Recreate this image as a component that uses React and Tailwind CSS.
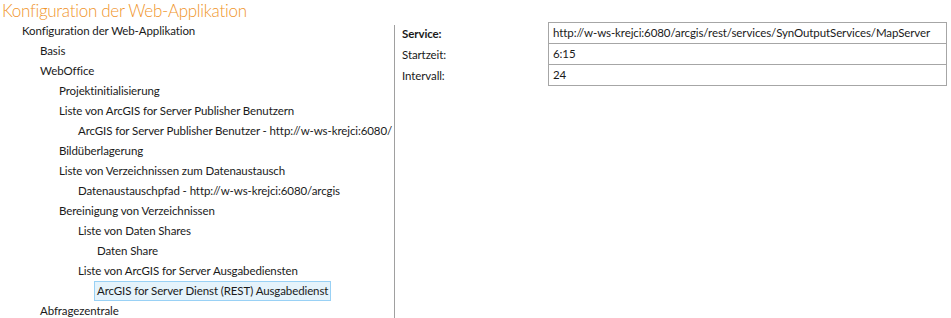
const tree = [
  { label: 'Konfiguration der Web-Applikation', level: 0 },
  { label: 'Basis', level: 1 },
  { label: 'WebOffice', level: 1 },
  { label: 'Projektinitialisierung', level: 2 },
  { label: 'Liste von ArcGIS for Server Publisher Benutzern', level: 2 },
  { label: 'ArcGIS for Server Publisher Benutzer - http://w-ws-krejci:6080/', level: 3 },
  { label: 'Bildüberlagerung', level: 2 },
  { label: 'Liste von Verzeichnissen zum Datenaustausch', level: 2 },
  { label: 'Datenaustauschpfad - http://w-ws-krejci:6080/arcgis', level: 3 },
  { label: 'Bereinigung von Verzeichnissen', level: 2 },
  { label: 'Liste von Daten Shares', level: 3 },
  { label: 'Daten Share', level: 4 },
  { label: 'Liste von ArcGIS for Server Ausgabediensten', level: 3 },
  { label: 'ArcGIS for Server Dienst (REST) Ausgabedienst', level: 4, selected: true },
  { label: 'Abfragezentrale', level: 1 },
];

const indent = ['pl-[19px]', 'pl-[37px]', 'pl-[56px]', 'pl-[75px]', 'pl-[94px]'];

const fields = [
  { label: 'Service:', value: 'http://w-ws-krejci:6080/arcgis/rest/services/SynOutputServices/MapServer', bold: true },
  { label: 'Startzeit:', value: '6:15' },
  { label: 'Intervall:', value: '24' },
];

export default function App() {
  return (
    <div
      className="w-[951px] h-[318px] overflow-hidden bg-white text-[11.5px] tracking-[-0.1px] text-[#1a1a1a] whitespace-nowrap"
      style={{ fontFamily: 'Lato, "Open Sans", sans-serif' }}
    >
      <div className="h-[21px] pl-[2px] text-[17px] tracking-[-0.3px] leading-[21px] font-light text-[#f0952b]">
        Konfiguration der Web-Applikation
      </div>

      <div className="flex">
        <div className="w-[394px] shrink-0">
          {tree.map((item, i) => (
            <div key={i} className={`h-[20px] flex items-center ${indent[item.level]}`}>
              {item.selected ? (
                <span className="h-[20px] flex items-center px-[2px] bg-[#e5f3fb] border border-[#99d1f5]">{item.label}</span>
              ) : (
                <span className="px-[3px]">{item.label}</span>
              )}
            </div>
          ))}
        </div>

        <div className="w-px shrink-0 mt-[4px] h-[300px] bg-[#a0a0a0]" />

        <div className="flex-1 pt-[1px] pr-[4px] flex">
          <div className="w-[153px] shrink-0 pl-[7px] pt-[1px]">
            {fields.map((f) => (
              <div key={f.label} className={`h-[21px] flex items-center ${f.bold ? 'font-bold' : ''}`}>
                {f.label}
              </div>
            ))}
          </div>
          <div className="flex-1 min-w-0 h-[64px] border border-[#a6a6a6] divide-y divide-[#a6a6a6]">
            {fields.map((f) => (
              <div key={f.label} className="h-[21px] flex items-center pl-[4px] overflow-hidden last:h-[20px]">
                {f.value}
              </div>
            ))}
          </div>
        </div>
      </div>
    </div>
  );
}
